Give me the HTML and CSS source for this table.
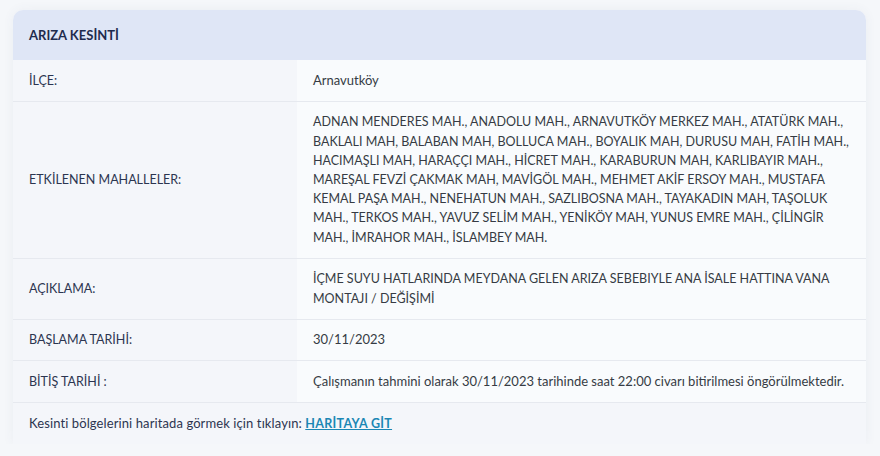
FILE: index.html
```
<!DOCTYPE html>
<html lang="tr">
<head>
    <meta charset="UTF-8">
    <meta name="viewport" content="width=device-width, initial-scale=1.0">
    <title>Arıza Kesinti</title>
    <link rel="stylesheet" href="styles.css">
</head>
<body>
    <div class="card">
        <div class="card-header">ARIZA KESİNTİ</div>
        <table class="info-table">
            <tr>
                <th>İLÇE:</th>
                <td class="sentence">Arnavutköy</td>
            </tr>
            <tr>
                <th>ETKİLENEN MAHALLELER:</th>
                <td>ADNAN MENDERES MAH., ANADOLU MAH., ARNAVUTKÖY MERKEZ MAH., ATATÜRK MAH., BAKLALI MAH, BALABAN MAH, BOLLUCA MAH., BOYALIK MAH, DURUSU MAH, FATİH MAH., HACIMAŞLI MAH, HARAÇÇI MAH., HİCRET MAH., KARABURUN MAH, KARLIBAYIR MAH., MAREŞAL FEVZİ ÇAKMAK MAH, MAVİGÖL MAH., MEHMET AKİF ERSOY MAH., MUSTAFA KEMAL PAŞA MAH., NENEHATUN MAH., SAZLIBOSNA MAH., TAYAKADIN MAH, TAŞOLUK MAH., TERKOS MAH., YAVUZ SELİM MAH., YENİKÖY MAH, YUNUS EMRE MAH., ÇİLİNGİR MAH., İMRAHOR MAH., İSLAMBEY MAH.</td>
            </tr>
            <tr>
                <th>AÇIKLAMA:</th>
                <td>İÇME SUYU HATLARINDA MEYDANA GELEN ARIZA SEBEBIYLE ANA İSALE HATTINA VANA MONTAJI / DEĞİŞİMİ</td>
            </tr>
            <tr>
                <th>BAŞLAMA TARİHİ:</th>
                <td class="sentence">30/11/2023</td>
            </tr>
            <tr>
                <th>BİTİŞ TARİHİ :</th>
                <td class="sentence">Çalışmanın tahmini olarak 30/11/2023 tarihinde saat 22:00 civarı bitirilmesi öngörülmektedir.</td>
            </tr>
        </table>
        <div class="card-footer">
            Kesinti bölgelerini haritada görmek için tıklayın: <a href="#" class="map-link">HARİTAYA GİT</a>
        </div>
    </div>
</body>
</html>
```

FILE: styles.css
```
body {
    margin: 0;
    padding: 10px 14px 0 13px;
    background-color: #f5f7fa;
    font-family: Lato, "Noto Sans", sans-serif;
    font-size: 12.5px;
    color: #363b44;
}
.card {
    background-color: #f9fbfd;
    border-radius: 10px 10px 0 0;
    box-shadow: 0 0 12px rgba(60, 80, 120, 0.06);
    overflow: hidden;
}
.card-header {
    background-color: #dfe6f6;
    height: 50px;
    line-height: 50px;
    padding: 0 16px;
    font-weight: bold;
    font-size: 13px;
    color: #1e2b4d;
}
.info-table {
    width: 100%;
    border-collapse: collapse;
}
.info-table th,
.info-table td {
    padding: 10.75px 16px;
    line-height: 19.2px;
    border-bottom: 1px solid #e6e9ef;
    vertical-align: middle;
    text-align: left;
}
.info-table th {
    width: 252px;
    font-weight: normal;
    color: #2c3550;
    background-color: #f4f6fa;
}
.info-table td {
    background-color: #f9fbfd;
    padding-right: 14px;
}
.info-table td.sentence {
    font-size: 13px;
}
.card-footer {
    padding: 11px 16px;
    line-height: 19.2px;
    font-size: 13px;
    letter-spacing: 0.1px;
    background-color: #f4f6fa;
    color: #2c3550;
}
.map-link {
    color: #1b87b4;
    font-weight: bold;
    font-size: 12.5px;
    letter-spacing: 0.3px;
}
```
